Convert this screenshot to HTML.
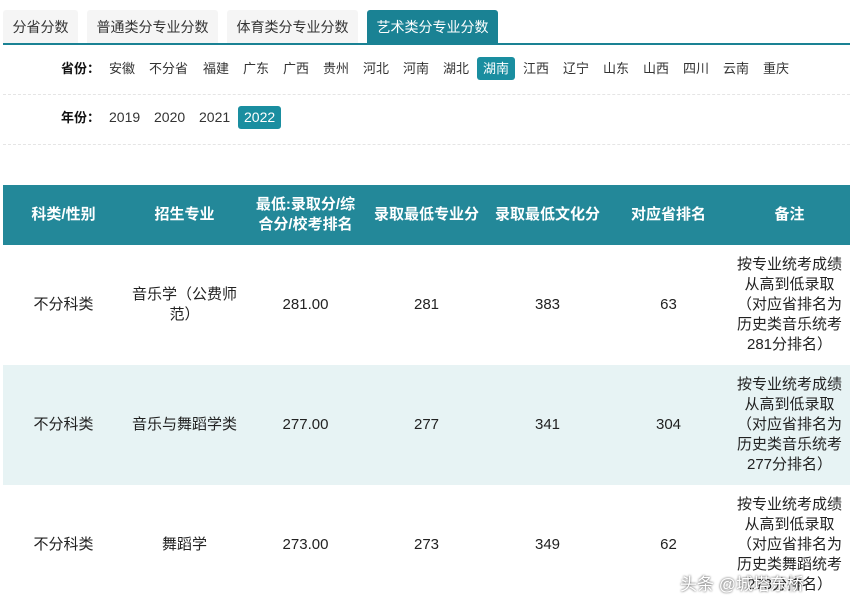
<!DOCTYPE html>
<html><head><meta charset="utf-8"><style>
*{margin:0;padding:0;box-sizing:border-box}
body{width:860px;height:610px;background:#fff;font-family:"Liberation Sans","Noto Sans CJK SC",sans-serif;color:#333;position:relative;overflow:hidden}
.tab{position:absolute;top:10px;height:34px;line-height:34px;background:#f5f5f5;font-size:14px;text-align:center;border-radius:3px 3px 0 0;color:#333}
.tab.on{background:#1a8294;color:#fff}
.bar{position:absolute;left:3px;width:847px;top:43px;height:2px;background:#1a8294}
.it{position:absolute;font-size:13px;height:23px;line-height:23px;color:#333}
.lab{font-weight:bold;color:#111}
.act{background:#1a8ea0;color:#fff;border-radius:3px;padding:0 6px}
.dash{position:absolute;left:3px;width:847px;border-top:1px dashed #e5e5e5}
table{position:absolute;left:3px;top:185px;width:847px;border-collapse:collapse;table-layout:fixed}
th{background:#238899;color:#fff;font-size:15px;height:60px;font-weight:bold;line-height:20px;padding:0;white-space:nowrap}
td{height:120px;text-align:center;font-size:15px;color:#222;line-height:20px;white-space:nowrap}
tr.alt td{background:#e7f3f4}
</style></head><body>
<div class="tab" style="left:3px;width:75px">分省分数</div>
<div class="tab" style="left:87px;width:131px">普通类分专业分数</div>
<div class="tab" style="left:227px;width:131px">体育类分专业分数</div>
<div class="tab on" style="left:367px;width:131px">艺术类分专业分数</div>
<div class="bar"></div>
<div class="it lab" style="left:61px;top:57px">省份：</div>
<div class="it" style="left:109px;top:57px">安徽</div>
<div class="it" style="left:149px;top:57px">不分省</div>
<div class="it" style="left:203px;top:57px">福建</div>
<div class="it" style="left:243px;top:57px">广东</div>
<div class="it" style="left:283px;top:57px">广西</div>
<div class="it" style="left:323px;top:57px">贵州</div>
<div class="it" style="left:363px;top:57px">河北</div>
<div class="it" style="left:403px;top:57px">河南</div>
<div class="it" style="left:443px;top:57px">湖北</div>
<div class="it act" style="left:477px;top:57px">湖南</div>
<div class="it" style="left:523px;top:57px">江西</div>
<div class="it" style="left:563px;top:57px">辽宁</div>
<div class="it" style="left:603px;top:57px">山东</div>
<div class="it" style="left:643px;top:57px">山西</div>
<div class="it" style="left:683px;top:57px">四川</div>
<div class="it" style="left:723px;top:57px">云南</div>
<div class="it" style="left:763px;top:57px">重庆</div>
<div class="dash" style="top:94px"></div>
<div class="it lab" style="left:61px;top:106px">年份：</div>
<div class="it" style="left:109px;top:106px;font-size:14px">2019</div>
<div class="it" style="left:154px;top:106px;font-size:14px">2020</div>
<div class="it" style="left:199px;top:106px;font-size:14px">2021</div>
<div class="it act" style="left:238px;top:106px;font-size:14px">2022</div>
<div class="dash" style="top:144px"></div>
<table>
<tr><th>科类/性别</th><th>招生专业</th><th>最低:录取分/综<br>合分/校考排名</th><th>录取最低专业分</th><th>录取最低文化分</th><th>对应省排名</th><th>备注</th></tr>
<tr><td>不分科类</td><td>音乐学（公费师<br>范）</td><td>281.00</td><td>281</td><td>383</td><td>63</td><td>按专业统考成绩<br>从高到低录取<br>（对应省排名为<br>历史类音乐统考<br>281分排名）</td></tr>
<tr class="alt"><td>不分科类</td><td>音乐与舞蹈学类</td><td>277.00</td><td>277</td><td>341</td><td>304</td><td>按专业统考成绩<br>从高到低录取<br>（对应省排名为<br>历史类音乐统考<br>277分排名）</td></tr>
<tr><td>不分科类</td><td>舞蹈学</td><td>273.00</td><td>273</td><td>349</td><td>62</td><td>按专业统考成绩<br>从高到低录取<br>（对应省排名为<br>历史类舞蹈统考<br>273分排名）</td></tr>
</table>
<div style="position:absolute;left:680px;top:570px;font-size:17px;color:#fff;text-shadow:0 0 2px #333">头条 @城塔东桥</div>
</body></html>
